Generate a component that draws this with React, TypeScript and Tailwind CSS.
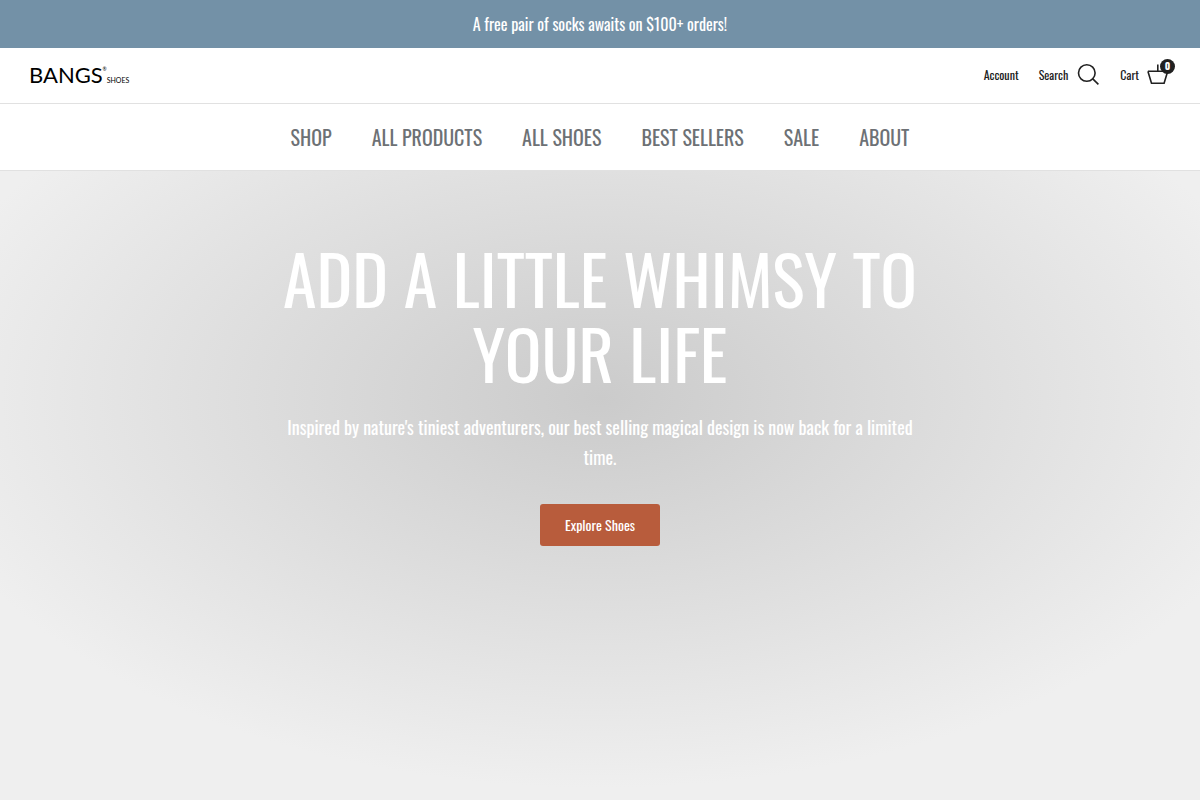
import React from "react";

const navLinks = ["SHOP", "ALL PRODUCTS", "ALL SHOES", "BEST SELLERS", "SALE", "ABOUT"];

function Logo() {
  return (
    <a href="#" aria-label="Bangs Shoes" className="flex items-baseline gap-1 pt-1.5 font-[Lato,sans-serif] text-black">
      <span className="relative text-[22px] leading-6">
        BANGS
        <span className="absolute top-0 -right-1 text-[5px] leading-3">®</span>
      </span>
      <span className="text-[7px] leading-6">SHOES</span>
    </a>
  );
}

function SearchIcon() {
  return (
    <svg className="size-6" viewBox="0 0 24 24" fill="none" stroke="currentColor" strokeWidth="1.6" aria-hidden="true">
      <circle cx="10.8" cy="10" r="8.3" />
      <path d="M16.8 15.9 22.4 21.4" />
    </svg>
  );
}

function BasketIcon() {
  return (
    <svg className="size-6" viewBox="0 0 24 24" fill="none" stroke="currentColor" strokeWidth="1.6" aria-hidden="true">
      <path d="M.9 8.2h19.8L17.1 20.3H4.5L.9 8.2M10.8 1.5v6.7" />
    </svg>
  );
}

export default function App() {
  return (
    <div className="flex min-h-screen flex-col bg-white font-[Oswald,'Roboto_Condensed','Liberation_Sans_Narrow',sans-serif] text-[#212121]">
      <div className="bg-[#7391a7] px-8 py-3 text-center text-base leading-6 text-white">
        A free pair of socks awaits on $100+ orders!
      </div>

      <header>
        <div className="flex h-14 items-center justify-between border-b border-[#e1e1e1] px-[29px] pb-0.5">
          <Logo />
          <div className="flex items-center gap-5 text-xs">
            <a href="#">Account</a>
            <a href="#" className="flex items-center gap-2">
              Search
              <SearchIcon />
            </a>
            <a href="#" className="relative flex items-center gap-2">
              Cart
              <BasketIcon />
              <span className="absolute -top-1 -right-1 flex size-[15px] items-center justify-center rounded-full bg-[#212121] text-[10px] font-bold text-white">
                0
              </span>
            </a>
          </div>
        </div>
        <nav className="flex flex-wrap justify-center gap-x-10 border-b border-[#e1e1e1] px-8 py-[18px] text-xl leading-[30px] text-[#6d7175]">
          {navLinks.map((label) => (
            <a key={label} href="#">
              {label}
            </a>
          ))}
        </nav>
      </header>

      <main className="flex flex-1 flex-col items-center bg-[#f0f0f0] bg-[radial-gradient(58%_390px_at_50%_227px,#cbcbcb,#efefef)] px-8 pt-[69px] pb-20 text-center text-white">
        <h1 className="max-w-[650px] text-[68px] leading-[75px]">ADD A LITTLE WHIMSY TO YOUR LIFE</h1>
        <p className="mt-[22px] max-w-[650px] text-lg leading-[30px]">
          Inspired by nature's tiniest adventurers, our best selling magical design is now back for a limited time.
        </p>
        <a href="#" className="mt-8 flex h-[42px] items-center rounded-[3px] bg-[#b85c3c] px-[25px] text-sm">
          Explore Shoes
        </a>
      </main>
    </div>
  );
}
